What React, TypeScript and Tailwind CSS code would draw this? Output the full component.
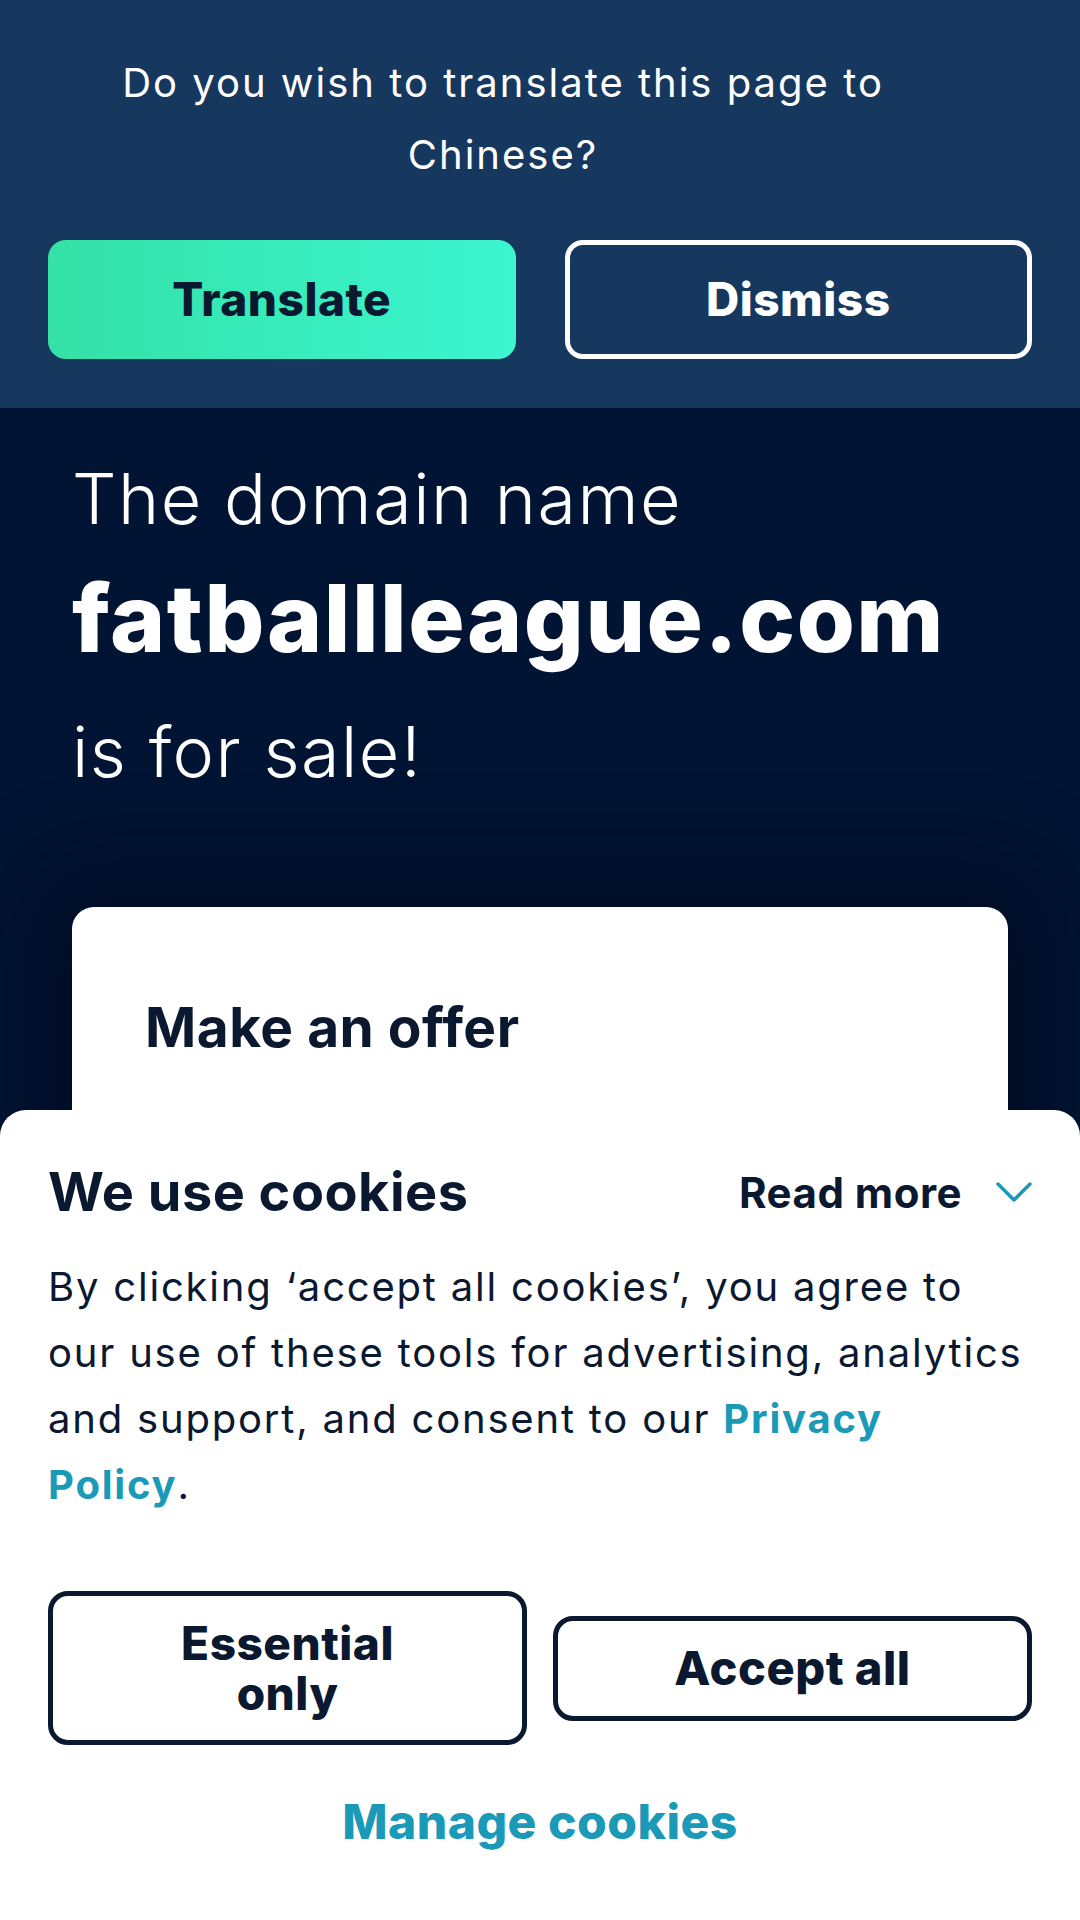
export default function App() {
  return (
    <div
      className="relative min-h-[1920px] w-[1080px] overflow-hidden bg-[#011433]"
      style={{ fontFamily: "Inter, 'Noto Sans', sans-serif" }}
    >
      {/* translate banner */}
      <div className="h-[408px] bg-[#16375e] px-12 pt-[47px]">
        <div className="pr-[74px] text-center text-[40px] leading-[72px] tracking-[2px] text-white">
          Do you wish to translate this page to
          <br />
          Chinese?
        </div>
        <div className="mt-[49px] grid grid-cols-2 gap-[49px]">
          <button className="h-[119px] w-full rounded-[18px] bg-gradient-to-r from-[#34e1a6] to-[#3cf6d0] text-[46px] font-extrabold tracking-[0.5px] text-[#0a1830]">
            Translate
          </button>
          <button className="h-[119px] w-full rounded-[18px] border-[5px] border-white text-[46px] font-extrabold tracking-[0.5px] text-white">
            Dismiss
          </button>
        </div>
      </div>

      {/* hero */}
      <div className="px-[72px] pt-[49px] text-white">
        <div className="text-[70px] font-light leading-[84px] tracking-[1.5px]">The domain name</div>
        <div className="mt-[22px] text-[94px] font-extrabold leading-[110px] tracking-[1.5px]">
          fatballleague.com
        </div>
        <div className="mt-[37px] text-[70px] font-light leading-[84px] tracking-[1.5px]">is for sale!</div>
      </div>

      <div className="mt-[113px] px-[72px]">
        <div className="h-[600px] rounded-[22px] bg-gradient-to-b from-white via-white to-[#f5f5f5] px-[73px] pt-[87px] shadow-[0_0_80px_40px_rgba(0,8,28,0.6)]">
          <div className="text-[55px] font-bold leading-[66px] tracking-[0.5px] text-[#0a1830]">Make an offer</div>
        </div>
      </div>

      {/* cookie sheet */}
      <div className="absolute inset-x-0 bottom-0 h-[810px] rounded-t-[26px] bg-white px-12 pt-[50px] text-[#0a1830]">
        <div className="flex items-center justify-between">
          <div className="text-[54px] font-bold leading-[64px] tracking-[0.5px]">We use cookies</div>
          <div className="flex items-center gap-[34px]">
            <span className="text-[42px] font-bold tracking-[0.5px]">Read more</span>
            <svg width="36" height="20" viewBox="0 0 36 20" fill="none">
              <path d="M2 2 L18 18 L34 2" stroke="#1b9ab8" strokeWidth="3.5" strokeLinecap="round" strokeLinejoin="round" />
            </svg>
          </div>
        </div>
        <p className="mt-[30px] text-[40px] leading-[66px] tracking-[1.8px]">
          By clicking ‘accept all cookies’, you agree to
          <br />
          our use of these tools for advertising, analytics
          <br />
          and support, and consent to our{" "}
          <a className="font-bold text-[#1b9ab8]">
            Privacy
            <br />
            Policy
          </a>
          .
        </p>
        <div className="mt-[73px] grid grid-cols-2 items-center gap-[26px]">
          <button className="h-[154px] w-full rounded-[20px] border-[5px] border-[#0a1830] px-10 text-[46px] font-extrabold leading-[50px] tracking-[0.5px]">
            Essential
            <br />
            only
          </button>
          <button className="h-[105px] w-full rounded-[20px] border-[5px] border-[#0a1830] text-[47px] font-extrabold tracking-[0.5px]">
            Accept all
          </button>
        </div>
        <div className="mt-[48px] text-center text-[48px] font-extrabold leading-[58px] tracking-[0.5px] text-[#1b9ab8]">
          Manage cookies
        </div>
      </div>
    </div>
  );
}
